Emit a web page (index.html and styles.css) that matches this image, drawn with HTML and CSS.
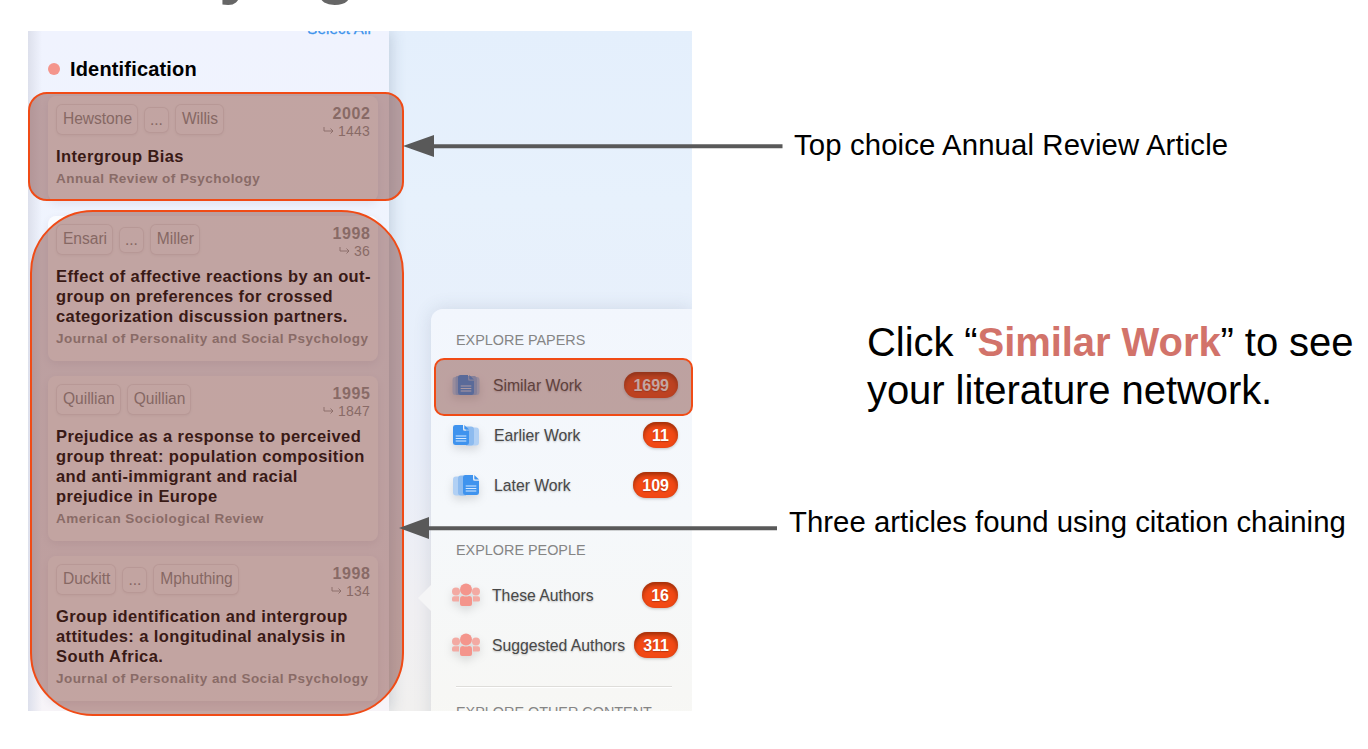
FILE: index.html
```html
<!DOCTYPE html>
<html lang="en">
<head>
<meta charset="utf-8">
<title>Literature network</title>
<link rel="stylesheet" href="styles.css">
</head>
<body>
<svg class="defs" width="0" height="0" aria-hidden="true">
  <symbol id="doc" viewBox="0 0 16 20">
    <path fill="#3f93ee" d="M2.500 0H10v4.200q0 1.500 1.500 1.500H16v12q0 2.300-2.500 2.300h-11Q0 20 0 17.700V2.300Q0 0 2.500 0Z"/>
    <path fill="#3f93ee" d="M11.300 0 16 4.500h-3.700q-1 0-1-1Z"/>
    <path stroke="#d5e9ff" stroke-width="1.200" d="M2.700 11h10.600M2.700 13.500h10.600M2.700 16h10.600"/>
  </symbol>
  <symbol id="people" viewBox="0 0 28 24">
    <g fill="#f3aaa3"><circle cx="4" cy="8.500" r="4"/><circle cx="24" cy="8.500" r="4"/><path d="M0 15.500q0-2.300 2-2.300h5v5.300H1.500Q0 18.500 0 17ZM28 15.500q0-2.300-2-2.300h-5v5.300h5.500q1.500 0 1.500-1.500Z"/></g>
    <g fill="#f4958c"><circle cx="14" cy="6.500" r="6"/><path d="M8 16q0-3 3-3 3 1.200 6 0 3 0 3 3v5q0 2-2 2h-8q-2 0-2-2Z"/></g>
  </symbol>
</svg>
<main class="slide">
  <h1 class="headline">Identifying</h1>
  <section class="shot">
    <div class="list">
      <a class="select-all">Select All</a>
      <h2 class="group"><i class="dot"></i>Identification</h2>
      <article class="card">
        <header><div class="chips"><span>Hewstone</span><span class="more">...</span><span>Willis</span></div><div class="meta"><b>2002</b><small><svg class="hook" viewBox="0 0 11 8"><path d="M1 0v4h9M7.500 1.500 10 4 7.500 6.500"/></svg>1443</small></div></header>
        <h3>Intergroup Bias</h3><p>Annual Review of Psychology</p>
      </article>
      <article class="card">
        <header><div class="chips"><span>Ensari</span><span class="more">...</span><span>Miller</span></div><div class="meta"><b>1998</b><small><svg class="hook" viewBox="0 0 11 8"><path d="M1 0v4h9M7.500 1.500 10 4 7.500 6.500"/></svg>36</small></div></header>
        <h3>Effect of affective reactions by an out-<br>group on preferences for crossed<br>categorization discussion partners.</h3><p>Journal of Personality and Social Psychology</p>
      </article>
      <article class="card">
        <header><div class="chips"><span>Quillian</span><span>Quillian</span></div><div class="meta"><b>1995</b><small><svg class="hook" viewBox="0 0 11 8"><path d="M1 0v4h9M7.500 1.500 10 4 7.500 6.500"/></svg>1847</small></div></header>
        <h3>Prejudice as a response to perceived<br>group threat: population composition<br>and anti-immigrant and racial<br>prejudice in Europe</h3><p>American Sociological Review</p>
      </article>
      <article class="card">
        <header><div class="chips"><span>Duckitt</span><span class="more">...</span><span>Mphuthing</span></div><div class="meta"><b>1998</b><small><svg class="hook" viewBox="0 0 11 8"><path d="M1 0v4h9M7.500 1.500 10 4 7.500 6.500"/></svg>134</small></div></header>
        <h3>Group identification and intergroup<br>attitudes: a longitudinal analysis in<br>South Africa.</h3><p>Journal of Personality and Social Psychology</p>
      </article>
    </div>
    <div class="canvas">
      <nav class="menu">
        <h4>EXPLORE PAPERS</h4>
        <div class="item"><svg class="icon" viewBox="0 0 28 24"><path class="sheet-far" d="M3 4h22q2.500 0 2.500 3v12q0 3-2.500 3H3q-2.500 0-2.500-3V7Q.500 4 3 4Z"/><path class="sheet" d="M5 3h18q2 1 2 3v14q0 2-2 2H5q-1.500 0-1.500-2V5Q3.500 3 5 3Z"/><use href="#doc" x="6" y="2" width="16" height="20"/></svg><span>Similar Work</span><b>1699</b></div>
        <div class="item indent"><svg class="icon" viewBox="0 0 28 24"><path class="sheet-far" d="M16 4.500h8q3 0 3 3v12q0 3-3 3h-8Z"/><path class="sheet" d="M14 3.500h5q3 0 3 3v13q0 3-3 3h-5Z"/><use href="#doc" x="1" y="2" width="16" height="20"/></svg><span>Earlier Work</span><b class="short">11</b></div>
        <div class="item indent"><svg class="icon" viewBox="0 0 28 24"><path class="sheet-far" d="M12 3.500H4q-3 0-3 3v13q0 3 3 3h8Z"/><path class="sheet" d="M14 2.500H9q-3 0-3 3v14q0 3 3 3h5Z"/><use href="#doc" x="11" y="2" width="16" height="20"/></svg><span>Later Work</span><b>109</b></div>
        <h4 class="second">EXPLORE PEOPLE</h4>
        <div class="item person"><svg class="icon"><use href="#people"/></svg><span>These Authors</span><b>16</b></div>
        <div class="item person"><svg class="icon"><use href="#people"/></svg><span>Suggested Authors</span><b>311</b></div>
        <hr>
        <h4 class="third">EXPLORE OTHER CONTENT</h4>
      </nav>
      <i class="pointer"></i>
    </div>
  </section>
  <section class="notes">
    <p class="note top">Top choice Annual Review Article</p>
    <p class="instruction">Click “<strong>Similar Work</strong>” to see<br>your literature network.</p>
    <p class="note chaining">Three articles found using citation chaining</p>
  </section>
  <div class="callout first"></div>
  <div class="callout rest"></div>
  <div class="callout similar"></div>
  <svg class="arrow one" viewBox="0 0 380 24"><path d="M0 12 31 1v9.300h348.500v4H31V23Z"/></svg>
  <svg class="arrow two" viewBox="0 0 380 24"><path d="M0 12 30 1v9.300h348v4H30V23Z"/></svg>
</main>
</body>
</html>
```
FILE: styles.css
```css
* { box-sizing: border-box; }
body { margin: 0; font-family: "Liberation Sans", Arial, sans-serif; background: #fff; }
h1, h2, h3, h4, p { margin: 0; }
.defs { position: absolute; }
.slide { position: relative; width: 1368px; height: 749px; overflow: hidden; display: grid; grid-template-columns: 692px 1fr; grid-template-rows: 31px 1fr; }
.headline { grid-column: 1 / 3; height: 31px; padding-left: 19px; font-size: 66.67px; line-height: 76px; margin-top: -70px; color: #666; white-space: nowrap; }
.shot { margin-left: 28px; width: 664px; height: 680px; overflow: hidden; display: flex; background: linear-gradient(#e4effc 0%, #e7f1fc 25%, #e8eefa 60%, #f0eff2 85%, #f1f0ef 100%); }
.list { position: relative; z-index: 1; width: 361px; flex: none; padding: 0 11px 0 20px; background: linear-gradient(90deg, #dde0ec 0, rgba(221, 224, 236, 0) 14px), linear-gradient(#f0f3fe, #eff4fe 35%, #f5f3f9 90%, #f7f4f8); box-shadow: 2px 0 14px rgba(60, 80, 110, .22); }
.select-all { display: block; height: 21px; margin: -12px 7px 0 0; text-align: right; font-size: 15px; line-height: 20px; letter-spacing: .2px; color: #3e94ec; -webkit-text-stroke: .3px #3e94ec; }
.group { display: flex; align-items: center; gap: 10px; height: 30px; margin: 14px 0 12px; font-size: 20px; line-height: 30px; letter-spacing: .17px; color: #000; }
.dot { width: 12px; height: 12px; border-radius: 50%; background: #f4958c; }
.card { width: 330px; margin-bottom: 15px; padding: 8px 8px 14px; border-radius: 8px; background: rgba(255, 255, 255, .7); box-shadow: 0 3px 8px rgba(80, 60, 90, .09); }
.card header { display: flex; justify-content: space-between; height: 31px; }
.chips { display: flex; align-items: center; gap: 6px; }
.chips span { height: 31px; padding: 0 5px 0 6px; border: 1px solid rgba(120, 100, 105, .14); border-radius: 6px; font-size: 15.6px; line-height: 27px; letter-spacing: -.04px; color: #8e8e8e; background: rgba(255, 255, 255, .1); box-shadow: 0 1px 3px rgba(100, 80, 90, .09); }
.chips .more { height: 26px; padding: 0 5px; line-height: 24px; }
.meta { display: flex; flex-direction: column; align-items: flex-end; color: #939393; }
.meta b { font-size: 16px; line-height: 20px; letter-spacing: .6px; margin-right: -.6px; }
.meta small { display: flex; align-items: center; gap: 4px; margin-top: -1px; font-size: 14px; line-height: 16px; letter-spacing: .2px; }
.hook { width: 11px; height: 8px; fill: none; stroke: #939393; stroke-width: .9; }
.card h3 { margin-top: 11px; font-size: 16.5px; line-height: 20px; letter-spacing: .4px; white-space: nowrap; color: #000; }
.card p { margin-top: 5px; font-size: 13.5px; line-height: 16px; letter-spacing: .45px; font-weight: bold; white-space: nowrap; color: #949494; }
.canvas { position: relative; flex: 1; padding: 278px 0 0 42px; }
.menu { height: 450px; border-radius: 12px 0 0 0; padding: 21px 0 0 25px; background: linear-gradient(#f2f6fd, #f5f8fb 45%, #f7f7f5 85%, #f8f8f3); box-shadow: 0 0 18px rgba(60, 80, 110, .15); }
.menu h4 { height: 20px; font-size: 14.4px; line-height: 20px; font-weight: normal; color: #858585; margin-bottom: 10px; }
.menu .second { margin-top: 30px; }
.menu hr { width: 216px; height: 2px; margin: 16px 0 14px; border: 0; background: #deddda; border-bottom: 1px solid #fff; }
.item { display: flex; align-items: center; height: 50px; margin-left: -4px; padding: 5px 14px 5px 0; font-size: 15.75px; line-height: 32px; color: #484848; text-shadow: 0 1px 2px rgba(0, 0, 0, .22); }
.item .icon { width: 28px; height: 24px; margin-right: 13px; flex: none; filter: drop-shadow(0 4px 4px rgba(0, 0, 0, .13)); }
.item.indent .icon { margin-right: 14px; }
.item.person .icon { margin: 0 12px 0 0; }
.item span { padding-top: 2px; white-space: nowrap; }
.item b { margin-left: auto; height: 26px; padding: 0 9px; border-radius: 13px; font-size: 16px; line-height: 28px; color: #fff; background: #f24915; box-shadow: inset 0 3px 4px rgba(100, 30, 0, .58), 0 1px 3px rgba(0, 0, 0, .22); text-shadow: 0 1px 1px rgba(80, 20, 0, .35); }
.sheet { fill: #8dbbef; }
.sheet-far { fill: #b1d0f4; }
.pointer { position: absolute; left: 29px; top: 554px; width: 13px; height: 26px; background: #f5f5f6; clip-path: polygon(0 50%, 100% 0, 100% 100%); }
.notes { padding: 96px 0 0 97px; white-space: nowrap; color: #000; }
.note { margin-left: 5px; font-size: 29.33px; line-height: 36px; }
.top { letter-spacing: .12px; }
.instruction { margin: 155px 0 0 78px; font-size: 40px; line-height: 48px; letter-spacing: -.07px; }
.instruction strong { color: #d2736a; }
.chaining { margin: 90px 0 0; letter-spacing: .02px; }
.callout { position: absolute; z-index: 2; border: 2px solid #f04b16; background: rgba(124, 58, 49, .45); }
.first { left: 28px; top: 92px; width: 376px; height: 109px; border-radius: 19px; }
.rest { left: 30px; top: 210px; width: 374px; height: 506px; border-radius: 63px; }
.similar { left: 434px; top: 358px; width: 259px; height: 58px; border-radius: 10px; }
.arrow { position: absolute; z-index: 3; width: 380px; height: 24px; fill: #595959; }
.one { left: 403px; top: 134px; }
.two { left: 399px; top: 516px; }
```
